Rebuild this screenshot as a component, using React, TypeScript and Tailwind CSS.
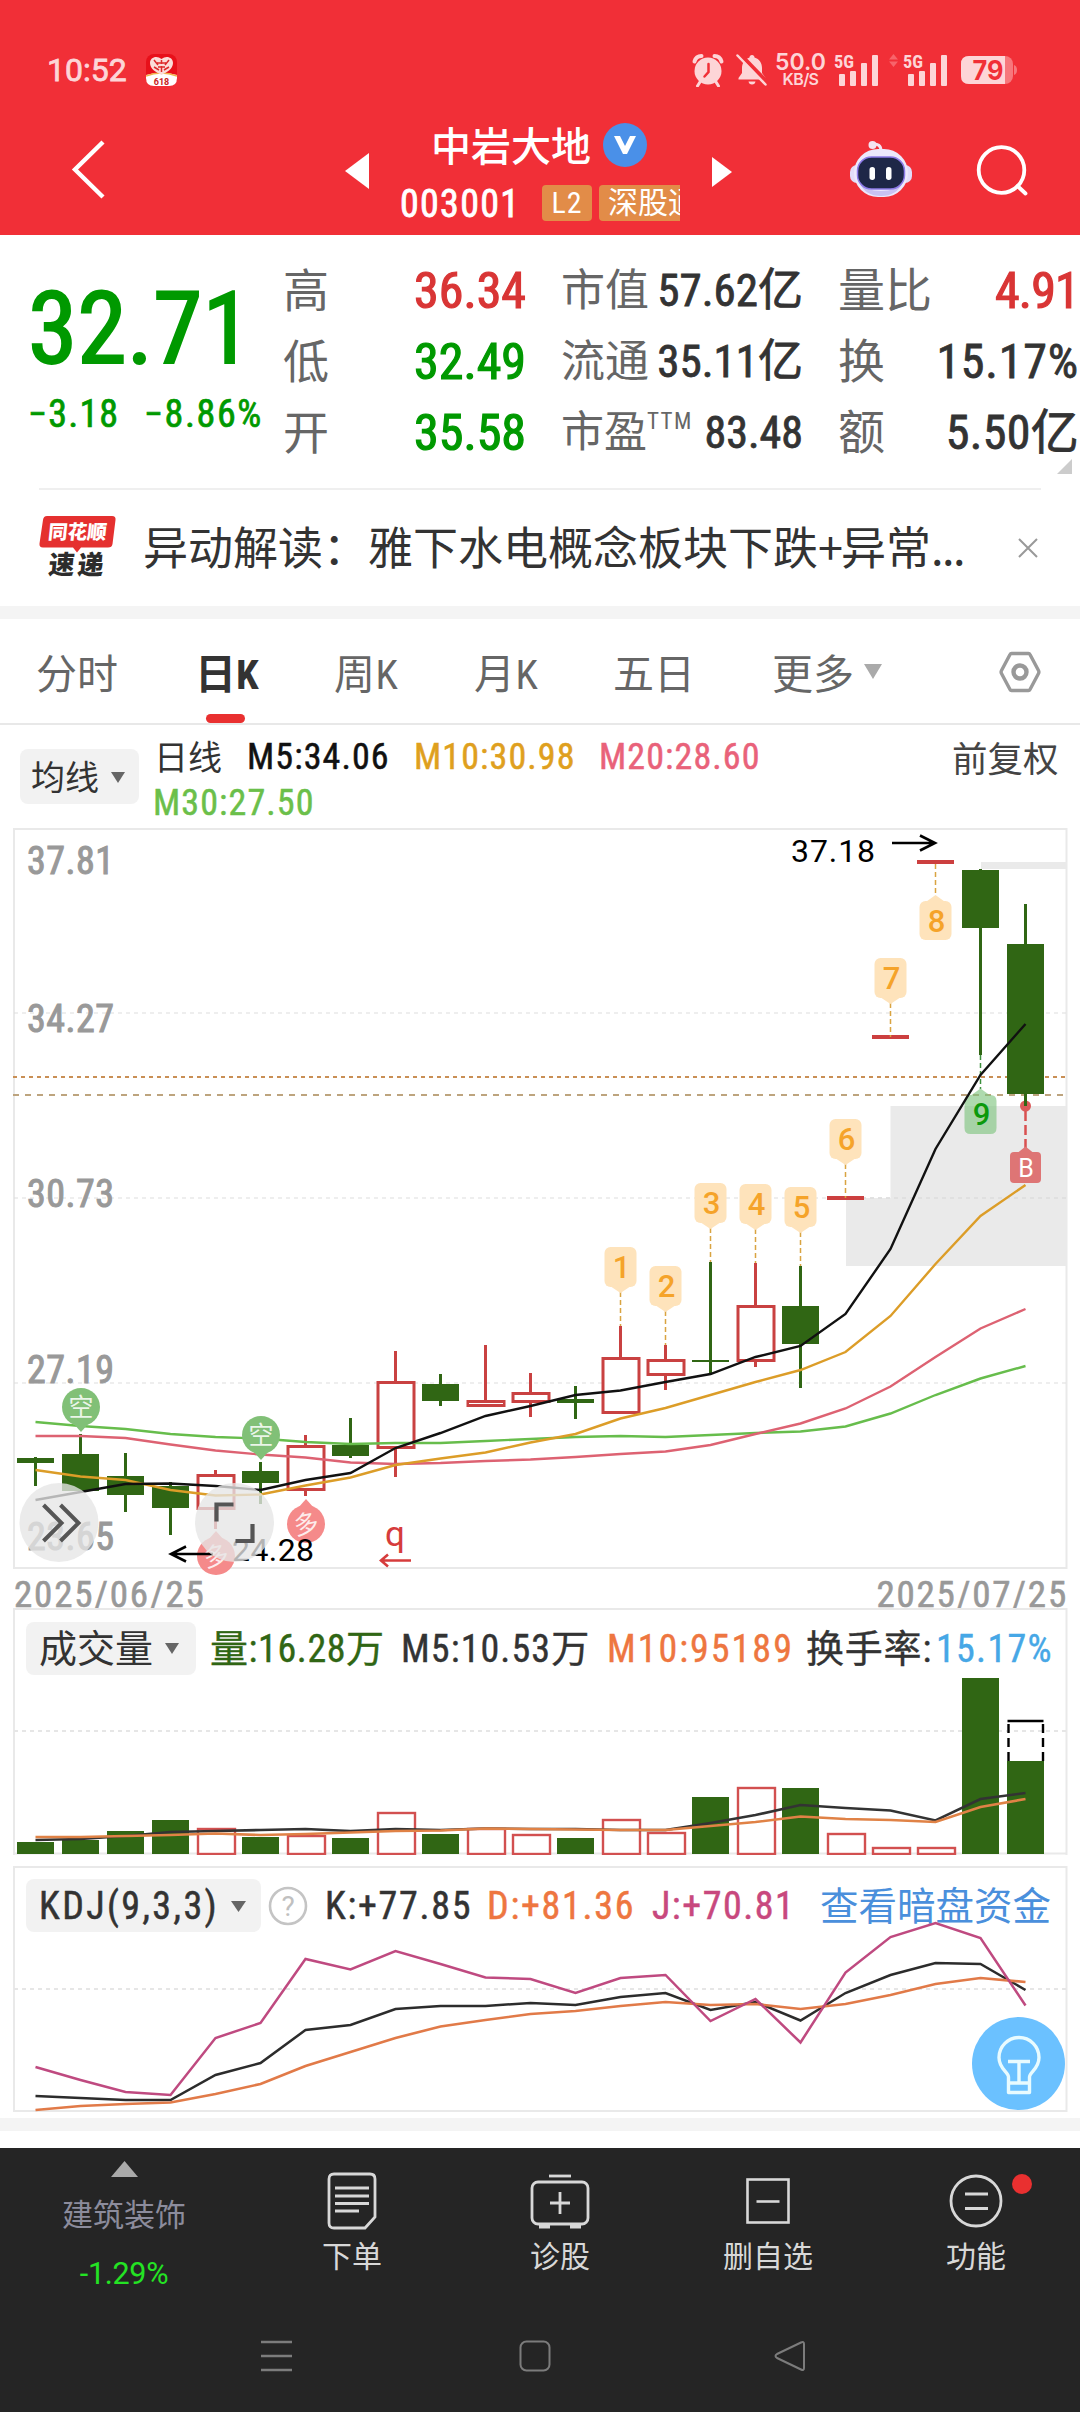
import type { ReactNode } from "react";

type Candle = {
  up: boolean;
  high: number;
  top: number;
  bottom: number;
  low: number;
};

const x = (i: number) => 35.5 + i * 45;

const line = (values: number[]) => values.map((v, i) => `${x(i)},${v}`).join(" ");

// [up, high, top, bottom, low]
const candles: Candle[] = (
  [
    [0, 1457, 1458, 1463, 1486],
    [0, 1434, 1454, 1491, 1491],
    [0, 1453, 1476, 1495, 1512],
    [0, 1482, 1486, 1508, 1535],
    [1, 1470, 1474, 1510, 1529],
    [0, 1462, 1471, 1483, 1504],
    [1, 1435, 1445, 1491, 1496],
    [0, 1418, 1445, 1456, 1458],
    [1, 1351, 1381, 1449, 1477],
    [0, 1374, 1384, 1401, 1406],
    [1, 1345, 1400, 1407, 1407],
    [1, 1373, 1392, 1403, 1417],
    [0, 1386, 1399, 1403, 1419],
    [1, 1326, 1357, 1414, 1414],
    [1, 1345, 1359, 1376, 1390],
    [0, 1262, 1360, 1362, 1375],
    [1, 1263, 1305, 1362, 1367],
    [0, 1266, 1306, 1344, 1388],
    [1, 1196, 1196, 1200, 1200],
    [1, 1035, 1035, 1039, 1039],
    [1, 860, 860, 864, 864],
    [0, 869, 870, 928, 1055],
    [0, 904, 944, 1094, 1106],
  ] as number[][]
).map(([up, high, top, bottom, low]) => ({ up: up === 1, high, top, bottom, low }));

const ma5 = [1500, 1492, 1484, 1483.5, 1486, 1490, 1480, 1473, 1448, 1433, 1416, 1406, 1395, 1390.5, 1382, 1374, 1357, 1346, 1314, 1249, 1149, 1075, 1024];
const ma10 = [1470, 1476.5, 1480, 1490, 1495.5, 1494.5, 1485.5, 1477.5, 1465, 1458.5, 1452.5, 1442.5, 1434, 1418.5, 1408, 1395, 1382, 1370, 1352, 1316, 1264, 1216, 1185];
const ma20 = [1436, 1436, 1438, 1444.5, 1450.5, 1454.5, 1457.5, 1462.5, 1464, 1463, 1461, 1459.5, 1457, 1454, 1451.5, 1445, 1434, 1423.5, 1408.5, 1386.5, 1357, 1328.5, 1309];
const ma30 = [1422, 1426, 1429, 1434, 1437, 1438.5, 1442, 1444, 1443, 1443, 1441, 1439, 1437, 1436, 1437, 1435, 1433, 1431.5, 1426.5, 1413.5, 1395, 1378.5, 1366];

const volumeTops = [1842, 1840, 1831, 1820, 1828, 1837, 1835, 1838, 1812, 1834, 1828, 1834, 1838, 1819, 1832, 1797, 1787, 1788, 1833, 1847, 1847, 1678, 1761];
const volM5 = [1840, 1839, 1836, 1832, 1831, 1830, 1829, 1831, 1829, 1830, 1828.5, 1829, 1829, 1830, 1830, 1823, 1815, 1805, 1808, 1810.5, 1820.5, 1799, 1793];
const volM10 = [1837, 1837, 1836, 1835, 1833.5, 1835, 1834, 1832.5, 1831, 1830.5, 1828.5, 1829, 1829.5, 1830, 1830, 1826, 1822, 1816.5, 1819, 1820, 1822, 1807, 1799];

const kLine = [2096, 2098, 2100, 2100, 2075, 2063, 2030, 2025, 2009, 2006, 2006, 2003, 2005, 1997, 1993, 2010, 2002, 2020.5, 1993, 1975, 1963, 1964, 1990];
const dLine = [2110, 2106, 2104, 2102.5, 2094, 2084, 2066, 2052, 2038, 2026.5, 2020, 2014, 2011, 2006, 2002, 2005, 2004, 2009, 2004, 1995, 1984, 1978, 1982];
const jLine = [2067, 2080, 2092, 2095, 2038, 2023, 1959, 1969.5, 1951, 1964, 1977.5, 1979, 1993, 1978, 1975, 2021, 1999, 2042.5, 1972.5, 1937, 1923, 1938, 2005.5];

const axisLabels = [
  { text: "37.81", y: 874 },
  { text: "34.27", y: 1032 },
  { text: "30.73", y: 1207 },
  { text: "27.19", y: 1383 },
  { text: "23.65", y: 1550 },
];

// sequence markers above the candles, top is the y of the label box
const countMarks = [
  { n: 1, i: 13, top: 1247 },
  { n: 2, i: 14, top: 1266 },
  { n: 3, i: 15, top: 1183 },
  { n: 4, i: 16, top: 1184 },
  { n: 5, i: 17, top: 1187 },
  { n: 6, i: 18, top: 1119 },
  { n: 7, i: 19, top: 958 },
];

function Caret({ className }: { className: string }) {
  return (
    <svg viewBox="0 0 14 11" preserveAspectRatio="none" className={className}>
      <path d="M0 0h14L7 11z" fill="currentColor" />
    </svg>
  );
}

function Signal() {
  return (
    <svg width="46" height="34" viewBox="0 0 46 34" fill="#fdd5d7">
      <text x="0" y="15" fontSize="18" fontWeight="700" textLength="20" lengthAdjust="spacingAndGlyphs" className="[font-family:'Roboto_Condensed',sans-serif]">5G</text>
      <rect x="5" y="21" width="6" height="12" rx="1" />
      <rect x="16" y="18" width="6" height="15" rx="1" />
      <rect x="27" y="10" width="6" height="23" rx="1" />
      <rect x="38" y="2" width="6" height="31" rx="1" />
    </svg>
  );
}

function StatusBar() {
  return (
    <div className="mt-10 flex h-[60px] items-center pl-[47px] text-[#fdd5d7]">
      <span className="w-[99px] text-[32px] leading-none font-normal [-webkit-text-stroke:0.8px] [font-family:Roboto,sans-serif]">10:52</span>

      {/* App notification */}
      <svg width="31" height="32" viewBox="0 0 31 32">
        <rect width="31" height="32" rx="8" fill="#e8101a" />
        <path d="M0 21q15-5 31 0v3q0 8-8 8H8q-8 0-8-8z" fill="#fff" />
        <path d="M0 22q15-6 31 0" fill="none" stroke="#f0b24a" strokeWidth="1.5" />
        <path d="M15.500 5C11 1 4 3 4 9c0 6 6 9 11.500 12C21 18 27 15 27 9c0-6-7-8-11.500-4z" fill="#fbdcd8" />
        <path d="M8 6l4 5M23 6l-4 5M8 13l5 3M23 13l-5 3M15.500 6v4M11 9h9M12 13h7M15.500 12v6" stroke="#dd2a2a" strokeWidth="1.500" fill="none" />
        <text x="15.500" y="30.500" textAnchor="middle" fontSize="9" fontWeight="700" fill="#c81c1c" className="[font-family:Roboto,sans-serif]">618</text>
      </svg>

      {/* Alarm */}
      <svg width="32" height="34" viewBox="0 0 32 34" className="ml-[515px]">
        <circle cx="16" cy="18" r="13.500" fill="#fdd5d7" />
        <path d="M2.500 8.500Q4 3 9.500 3M29.500 8.500Q28 3 22.500 3" stroke="#fdd5d7" strokeWidth="4" strokeLinecap="round" fill="none" />
        <path d="M8 29l-2.500 4M24 29l2.500 4" stroke="#fdd5d7" strokeWidth="3" strokeLinecap="round" />
        <path d="M16.500 11v8l-4 4.500" stroke="#f12f37" strokeWidth="2.500" fill="none" strokeLinecap="round" />
      </svg>

      {/* Muted bell */}
      <svg width="32" height="32" viewBox="0 0 32 32" className="ml-3">
        <path d="M16 1c1.500 0 2.500 1 2.500 2.500C23.500 5 26 9 26 14v5l3.500 5v1.500H2.500V24L6 19v-5c0-5 3-9 7.500-10.500C13.500 2 14.500 1 16 1z" fill="#fdd5d7" />
        <path d="M12.500 27.500h7q-.5 3-3.500 3t-3.500-3z" fill="#fdd5d7" />
        <path d="M3-1l29 30" stroke="#f12f37" strokeWidth="4" />
        <path d="M1.500 1.500L29.500 30.500" stroke="#fdd5d7" strokeWidth="2.500" strokeLinecap="round" />
      </svg>

      <div className="ml-[7px] flex w-[51px] flex-col items-center [font-family:Inter,sans-serif]">
        <span className="text-[23px] leading-[18px] font-semibold">50.0</span>
        <span className="text-[16px] leading-[16px] font-semibold tracking-[-0.6px]">KB/S</span>
      </div>

      <div className="ml-2 flex items-center">
        <Signal />
        <svg width="9" height="13" viewBox="0 0 9 13" className="-mt-5 ml-[9px]" fill="#f7646a">
          <path d="M0 5.500L4.500 0 9 5.500zM0 7.500L4.500 13 9 7.500z" />
        </svg>
        <span className="ml-[5px] flex"><Signal /></span>
      </div>

      {/* Battery */}
      <svg width="56" height="30" viewBox="0 0 56 30" className="ml-3">
        <rect x="0" y="1" width="52" height="28" rx="8" fill="#f7777c" />
        <path d="M53 10q3 1 3 5t-3 5z" fill="#f7777c" />
        <path d="M8 1h36v28H8q-8 0-8-8V9q0-8 8-8z" fill="#fdd5d7" />
        <text x="27" y="24.500" textAnchor="middle" fontSize="27" fontWeight="700" fill="#f12f37" textLength="31" lengthAdjust="spacingAndGlyphs" className="[font-family:Inter,sans-serif]">79</text>
      </svg>
    </div>
  );
}

function NavBar() {
  return (
    <div className="flex h-[135px] items-start text-white">
      <svg width="34" height="60" viewBox="0 0 34 60" className="mt-10 ml-[71px]" fill="none" stroke="#fff" strokeWidth="4.400">
        <path d="M32 2L4 29.500 32 57" />
      </svg>
      <svg width="24" height="36" viewBox="0 0 24 36" className="mt-[53px] ml-[240px]">
        <path d="M24 0v36L0 18z" fill="#fff" />
      </svg>

      <div className="ml-[31px] flex w-[280px] flex-col gap-[14px] overflow-hidden pt-[20px]">
        <div className="flex h-[50px] items-center justify-center gap-3">
          <h1 className="-mt-[3px] -ml-[2px] text-[40px] leading-none font-medium [font-family:'Noto_Sans_CJK_SC',sans-serif]">中岩大地</h1>
          <span className="flex h-11 w-11 items-center justify-center rounded-full bg-[#4a90e8]">
            <svg width="24" height="20" viewBox="0 0 24 20"><path d="M1 1h6l5 10 5-10h6l-9 18h-4z" fill="#fff" /></svg>
          </span>
        </div>
        <div className="mt-px flex h-9 items-center">
          <span className="w-[142px] shrink-0 pt-[2px] text-[38px] leading-none tracking-[1.3px] [-webkit-text-stroke:0.8px]">003001</span>
          <span className="flex h-9 w-[50px] shrink-0 items-center justify-center rounded-[4px] bg-[#e28c48] text-[30px] leading-none tracking-[1px]">L2</span>
          <span className="ml-[7px] flex h-9 shrink-0 items-center rounded-[4px] bg-[#e28c48] px-[9px] text-[30px] leading-none whitespace-nowrap">深股通</span>
        </div>
      </div>

      <svg width="20" height="30" viewBox="0 0 20 30" className="mt-[57px] ml-8">
        <path d="M0 0v30l20-15z" fill="#fff" />
      </svg>

      {/* Assistant robot */}
      <svg width="62" height="57" viewBox="0 0 62 57" className="mt-[41px] ml-[118px]">
        <circle cx="22.500" cy="4" r="4" fill="#f4e4f2" />
        <path d="M22 3q9-1 9 7" fill="none" stroke="#f4e4f2" strokeWidth="3" />
        <rect x="0" y="24" width="62" height="18" rx="7" fill="#e2dcf8" />
        <rect x="4" y="8" width="54" height="48" rx="24" fill="#ece8fb" />
        <path d="M9 41q6 14 22 14t22-14q-7 9-22 9T9 41z" fill="#c9c2f2" />
        <rect x="7.500" y="16" width="47" height="32" rx="14" fill="#1e2747" stroke="#8d7be8" strokeWidth="1.500" />
        <rect x="19.500" y="26" width="5.500" height="13" rx="2.700" fill="#fff" />
        <rect x="36" y="26" width="5.500" height="13" rx="2.700" fill="#fff" />
      </svg>

      <svg width="54" height="54" viewBox="0 0 54 54" className="mt-11 ml-[64px]" fill="none" stroke="#fff" strokeWidth="3.800" strokeLinecap="round">
        <circle cx="25.500" cy="26" r="22.800" />
        <path d="M41.500 42l8 7.500" />
      </svg>
    </div>
  );
}

function Stat({ label, size, children }: { label: ReactNode; size: string; children: ReactNode }) {
  return (
    <div className="flex h-[71px] items-center justify-between leading-none whitespace-nowrap">
      <span className={`text-[#666] ${size}`}>{label}</span>
      {children}
    </div>
  );
}

function Quote() {
  return (
    <section className="h-[253px] pt-[20px]">
      <div className="flex">
        <div className="w-[283px] shrink-0 pl-[28px] text-[#009900]">
          <div className="mt-[22px] text-[100px] leading-[104px] [-webkit-text-stroke:2px]">32.71</div>
          <div className="mt-[13px] flex text-[38px] leading-[40px] tracking-[1.2px] [-webkit-text-stroke:0.7px]">
            <span className="w-[116px]">−3.18</span>
            <span className="tracking-[1.6px]">−8.86%</span>
          </div>
        </div>

        <div className="w-[243px] shrink-0">
          <Stat label="高" size="text-[46px]"><b className="text-[50px] font-normal text-[#d93535] [-webkit-text-stroke:1.2px]">36.34</b></Stat>
          <Stat label="低" size="text-[46px]"><b className="text-[50px] font-normal text-[#009900] [-webkit-text-stroke:1.2px]">32.49</b></Stat>
          <Stat label="开" size="text-[46px]"><b className="text-[50px] font-normal text-[#009900] [-webkit-text-stroke:1.2px]">35.58</b></Stat>
        </div>

        <div className="ml-[35px] w-[242px] shrink-0 text-[#333]">
          <Stat label="市值" size="text-[44px]"><span className="text-[45px] [-webkit-text-stroke:0.8px]">57.62亿</span></Stat>
          <Stat label="流通" size="text-[44px]"><span className="text-[45px] [-webkit-text-stroke:0.8px]">35.11亿</span></Stat>
          <Stat label={<>市盈<sup className="relative -top-[18px] align-baseline text-[23px] tracking-[1.4px]">TTM</sup></>} size="text-[43px]">
            <span className="text-[44px] [-webkit-text-stroke:0.8px]">83.48</span>
          </Stat>
        </div>

        <div className="ml-[35px] w-[241px] shrink-0 text-[#333]">
          <Stat label="量比" size="text-[47px]"><b className="text-[50px] font-normal tracking-[-0.8px] text-[#d93535] [-webkit-text-stroke:1.2px]">4.91</b></Stat>
          <Stat label="换" size="text-[47px]"><span className="text-[48px] tracking-[0.8px] [-webkit-text-stroke:0.8px]">15.17%</span></Stat>
          <Stat label="额" size="text-[47px]"><span className="text-[48px] tracking-[0.3px] [-webkit-text-stroke:0.8px]">5.50亿</span></Stat>
        </div>
      </div>
      <svg width="15" height="15" viewBox="0 0 15 15" className="-mt-[9px] ml-[1057px]">
        <path d="M15 0v15H0z" fill="#ccc" />
      </svg>
    </section>
  );
}

function News() {
  return (
    <section className="mx-[39px] flex h-[118px] items-center border-t-2 border-[#efefef]">
      <svg width="78" height="64" viewBox="0 0 78 64">
        <path d="M8 0h65q4 0 3.500 4l-3 24q-.5 3.500-4.500 3.500H42l-4 5-4-5H4q-4 0-3.500-4L4 4q.5-4 4-4z" fill="#e5302f" />
        <g className="[font-family:'Noto_Sans_CJK_SC',sans-serif]" fontWeight="900" transform="skewX(-6)">
          <text x="11" y="23" fontSize="19.500" fill="#fff">同花顺</text>
          <text x="15" y="58.500" fontSize="26" fill="#2c2c2c" textLength="55">速递</text>
        </g>
      </svg>
      <p className="-mt-[5px] ml-[26px] w-[850px] text-[45px] leading-none whitespace-nowrap text-[#333] [font-family:'Noto_Sans_CJK_SC',sans-serif]">
        异动解读：雅下水电概念板块下跌<span className="tracking-[-2px]">+</span>异常<span className="tracking-[-1.5px]">...</span>
      </p>
      <svg width="20" height="20" viewBox="0 0 20 20" className="ml-[25px]" stroke="#999" strokeWidth="2">
        <path d="M1 1l18 18M19 1L1 19" />
      </svg>
    </section>
  );
}

function Tabs() {
  return (
    <nav className="flex h-[106px] border-b-2 border-[#e8e8e8] pt-[34px] pl-[36px] text-[41px] leading-[44px] text-[#666]">
      <span className="w-[159px]">分时</span>
      <div className="flex w-[139px] flex-col">
        <span className="font-bold text-[#333]">日K</span>
        <span className="mt-[17px] ml-[11px] h-[10px] w-[39px] rounded-[5px] bg-[#e93030]" />
      </div>
      <span className="w-[140px] tracking-[0.6px]">周K</span>
      <span className="w-[139px] tracking-[0.6px]">月K</span>
      <span className="w-[159px]">五日</span>
      <span className="w-[92px]">更多</span>
      <Caret className="mt-[11px] h-[15px] w-[18px] text-[#aaa]" />
      <svg width="42" height="42" viewBox="0 0 42 42" className="-mt-[2px] ml-[117px]" fill="none" stroke="#999" strokeWidth="3.400" strokeLinejoin="round">
        <path d="M12.500 2.500h17q1 0 1.500 1l8.500 16q.8 1.500 0 3L31 38.500q-.5 1-1.500 1h-17q-1 0-1.500-1L2.500 22.500q-.8-1.500 0-3L11 3.500q.5-1 1.500-1z" />
        <circle cx="21" cy="21" r="6.500" strokeWidth="4.400" />
      </svg>
    </nav>
  );
}

function MaLegend() {
  return (
    <div className="flex h-[103px] text-[36px] leading-[46px]">
      <div className="mt-6 ml-5 flex h-[55px] w-[119px] items-center rounded-[8px] bg-[#f2f2f2] pt-[2px] pl-[11px] text-[34px] text-[#333]">
        均线
        <Caret className="ml-3 h-[11px] w-[14px] text-[#666]" />
      </div>
      <div className="ml-[14px] w-[701px] pt-[9px] [-webkit-text-stroke:0.5px]">
        <div className="flex gap-[25px]">
          <span className="w-[69px] pt-[2px] pl-px text-[34px] leading-[44px] whitespace-nowrap text-[#333] [-webkit-text-stroke:0px]">日线</span>
          <span className="w-[142px] tracking-[1.1px] text-[#111]">M5:34.06</span>
          <span className="w-[160px] tracking-[1.1px] text-[#dfa01e]">M10:30.98</span>
          <span className="w-[160px] tracking-[1.1px] text-[#e9627a]">M20:28.60</span>
        </div>
        <div className="tracking-[1.1px] text-[#6bbf4a]">M30:27.50</div>
      </div>
      <span className="ml-[98px] pt-[12px] text-[35.5px] text-[#444]">前复权</span>
    </div>
  );
}

function CountMark({ n, i, top }: { n: number; i: number; top: number }) {
  const cx = x(i);
  return (
    <g>
      <path d={`M${cx} ${top + 45}v34`} stroke="#d9a441" strokeWidth="1.5" strokeDasharray="5 3" />
      <rect x={cx - 16} y={top} width="32" height="40" rx="6" fill="#fee3bb" />
      <path d={`M${cx - 9} ${top + 40}h18l-9 6z`} fill="#fee3bb" />
      <text x={cx + 1} y={top + 31} textAnchor="middle" fontSize="31" fontWeight="500" fill="#f5a32a">{n}</text>
    </g>
  );
}

// Round signal bubble, pointing down for 空 and up for 多
function Bubble({ cx, cy, text, fill, down }: { cx: number; cy: number; text: string; fill: string; down: boolean }) {
  const s = down ? 1 : -1;
  return (
    <g>
      <circle cx={cx} cy={cy} r="19" fill={fill} />
      <path d={`M${cx - 8} ${cy + s * 16}L${cx} ${cy + s * 25}L${cx + 8} ${cy + s * 16}z`} fill={fill} />
      <text x={cx} y={cy + 9} textAnchor="middle" fontSize="25" fill="#fff" fillOpacity="0.85" transform={down ? undefined : `rotate(-12 ${cx} ${cy})`}>{text}</text>
    </g>
  );
}

function PriceChart() {
  return (
    <svg width="1080" height="742" viewBox="0 828 1080 742" fill="none" className="block overflow-visible [font-family:Roboto,'Noto_Sans_CJK_SC',sans-serif]">
      <rect x="14" y="829" width="1052.5" height="739" stroke="#e9e9e9" strokeWidth="2" />
      <path d="M14 1013H1066M14 1198H1066M14 1383H1066" stroke="#dedede" strokeWidth="1.2" strokeDasharray="4 4" />

      <g fill="#999" stroke="#999" strokeWidth="1" fontSize="38" className="[font-family:'Roboto_Condensed',sans-serif]">
        {axisLabels.map((l) => (
          <text key={l.text} x="27" y={l.y} textLength="87">{l.text}</text>
        ))}
      </g>

      {/* Gap zones */}
      <path d="M981 862h86v7h-86zM890.500 1106h176v92h-176zM846 1198h221v68H846z" fill="#eaeaea" />
      <path d="M846 1198H1066" stroke="#d6d6d6" strokeWidth="1.2" strokeDasharray="4 4" />
      <path d="M13 1077H1066" stroke="#c98f55" strokeWidth="2" strokeDasharray="4 4" />
      <path d="M13 1095H1066" stroke="#bda47e" strokeWidth="2" strokeDasharray="6 6" />

      {candles.map((c, i) => {
        const cx = x(i);
        if (!c.up) {
          return (
            <g key={i}>
              <path d={`M${cx} ${c.high}V${c.low}`} stroke="#306614" strokeWidth="3" />
              <rect x={cx - 18.5} y={c.top} width="37" height={c.bottom - c.top} fill="#306614" />
            </g>
          );
        }
        if (c.bottom - c.top < 5) {
          return <rect key={i} x={cx - 18.5} y={c.top} width="37" height="4" fill="#cc3f3f" />;
        }
        return (
          <g key={i} stroke="#c94141" strokeWidth="3">
            <path d={`M${cx} ${c.high}V${c.top}M${cx} ${c.bottom}V${c.low}`} />
            <rect x={cx - 17.5} y={c.top + 1.5} width="36" height={c.bottom - c.top - 3} fill="#fff" />
          </g>
        );
      })}

      {countMarks.map((m) => (
        <CountMark key={m.n} {...m} />
      ))}

      {/* 8 hangs below its candle */}
      <path d="M935.500 864v32" stroke="#d9a441" strokeWidth="1.500" strokeDasharray="5 3" />
      <path d="M926.500 901.500h18l-9-6.500z" fill="#fee3bb" />
      <rect x="919.500" y="901" width="32" height="39" rx="6" fill="#fee3bb" />
      <text x="936.500" y="932" textAnchor="middle" fontSize="31" fontWeight="500" fill="#f5a32a">8</text>

      <path d="M980.500 1055v34" stroke="#3c8f3c" strokeWidth="1.500" strokeDasharray="5 3" />
      <path d="M970.500 1095h1l9-6.500 9 6.500h1q6 0 6 6v27q0 6-6 6h-20q-6 0-6-6v-27q0-6 6-6z" fill="#7cc47c" fillOpacity="0.62" />
      <text x="981.500" y="1125" textAnchor="middle" fontSize="31" fontWeight="500" fill="#0b990b">9</text>

      <polyline points={line(ma30)} stroke="#67bd4c" strokeWidth="2.4" />
      <polyline points={line(ma20)} stroke="#dd6272" strokeWidth="2.4" />
      <polyline points={line(ma10)} stroke="#dc9d28" strokeWidth="2.4" />
      <polyline points={line(ma5)} stroke="#111" strokeWidth="2.4" />

      {/* Buy point */}
      <circle cx="1025.500" cy="1106" r="5.500" fill="#dc5a5a" />
      <path d="M1025.500 1096v10" stroke="#306614" strokeWidth="3" />
      <path d="M1025.500 1111v37" stroke="#d95050" strokeWidth="2.500" strokeDasharray="10 4" />
      <path d="M1018 1152.500l7.500-6 7.500 6z" fill="#de7575" />
      <rect x="1010" y="1152" width="31" height="31" rx="4" fill="#de7575" />
      <text x="1026" y="1176.500" textAnchor="middle" fontSize="25" fill="#fff">B</text>

      <Bubble cx={81} cy={1407} text="空" fill="#81c077" down />
      <Bubble cx={261} cy={1435} text="空" fill="#81c077" down />
      <Bubble cx={306} cy={1524} text="多" fill="#f58a8a" down={false} />
      <Bubble cx={216} cy={1556} text="多" fill="#f58a8a" down={false} />

      <g fill="#000" fontSize="32">
        <text x="791" y="862" textLength="84">37.18</text>
        <text x="232" y="1561" textLength="82">24.28</text>
      </g>
      <path d="M892 843h43M920 835.500l15 7.500-15 7.500M213 1554h-42M186 1546.500l-15 7.500 15 7.500" stroke="#000" strokeWidth="2.600" />
      <text x="385" y="1546" fontSize="35" fill="#d63c3c">q</text>
      <path d="M411 1560.500h-30M388 1554.500l-7 6 7 6" stroke="#d63c3c" strokeWidth="2.600" />

      {/* Floating chart controls */}
      <g fill="#e6e6e6" fillOpacity="0.78">
        <circle cx="59" cy="1522.500" r="39.500" />
        <circle cx="234.500" cy="1522.500" r="39.500" />
      </g>
      <path d="M43.500 1505l18 18-18 18M60.500 1505l18 18-18 18" stroke="#555" strokeWidth="4" />
      <path d="M233.500 1504.500h-17v17M252.500 1524v17h-17" stroke="#555" strokeWidth="4.200" />
    </svg>
  );
}

function VolumePanel() {
  return (
    <section className="relative h-[247px]">
      <svg width="1080" height="247" viewBox="0 1608 1080 247" fill="none" className="absolute inset-0">
        <path d="M14 1855V1609H1066.500V1855M14 1853.500H1066.500" stroke="#e9e9e9" strokeWidth="2" />
        <path d="M14 1731H1066" stroke="#e6e6e6" strokeWidth="2" strokeDasharray="4 4" />
        {volumeTops.map((top, i) =>
          candles[i].up ? (
            <rect key={i} x={x(i) - 17.5} y={top + 1} width="37" height={1853 - top} stroke="#d25050" strokeWidth="2.4" fill="#fff" />
          ) : (
            <rect key={i} x={x(i) - 18.5} y={top} width="37" height={1854 - top} fill="#306614" />
          ),
        )}
        <path d="M1007.500 1721h36" stroke="#000" strokeWidth="2.600" />
        <path d="M1008.500 1761v-38M1043 1761v-38" stroke="#000" strokeWidth="2.400" strokeDasharray="9 5" />
        <polyline points={line(volM5)} stroke="#333" strokeWidth="2.6" />
        <polyline points={line(volM10)} stroke="#e08246" strokeWidth="2.6" />
      </svg>
      <div className="relative flex h-[80px] items-center pt-px pl-[26px] text-[38px] leading-none whitespace-nowrap [-webkit-text-stroke:0.4px]">
        <div className="flex h-[53px] w-[170px] items-center rounded-[8px] bg-[#f2f2f2] pl-[13px] text-[#333] [-webkit-text-stroke:0px]">
          成交量
          <Caret className="ml-3 h-[11px] w-[14px] text-[#666]" />
        </div>
        <span className="ml-[14px] w-[191px] tracking-[0.6px] text-[#306614]">量:16.28万</span>
        <span className="w-[206px] tracking-[1.1px] text-[#333]">M5:10.53万</span>
        <span className="w-[199px] tracking-[2px] text-[#ee7640]">M10:95189</span>
        <span className="w-[130px] tracking-[0.8px] text-[#333]">换手率:</span>
        <span className="tracking-[1.3px] text-[#46a7e6]">15.17%</span>
      </div>
    </section>
  );
}

function KdjPanel() {
  return (
    <section className="relative mt-[11px] h-[247px]">
      <div className="flex h-[78px] items-center pt-px pl-[26px] text-[38px] leading-none whitespace-nowrap [-webkit-text-stroke:0.5px]">
        <div className="flex h-[53px] w-[235px] items-center justify-between rounded-[8px] bg-[#f2f2f2] pt-px pr-[15px] pl-[13px] tracking-[2.4px] text-[#333]">
          KDJ(9,3,3)
          <Caret className="h-[11px] w-[15px] text-[#666]" />
        </div>
        <svg width="40" height="40" viewBox="0 0 40 40" className="ml-[7px]">
          <circle cx="20" cy="20" r="18" fill="none" stroke="#c4c4c4" strokeWidth="2.600" />
          <text x="20" y="30" textAnchor="middle" fontSize="28" fill="#c0c0c0" className="[font-family:Roboto,sans-serif]">?</text>
        </svg>
        <span className="ml-[17px] w-[162px] tracking-[1.7px] text-[#333]">K:+77.85</span>
        <span className="w-[165px] tracking-[1.7px] text-[#ee7640]">D:+81.36</span>
        <span className="w-[168px] tracking-[1.5px] text-[#c8487e]">J:+70.81</span>
        <span className="pt-[3px] text-[38.5px] text-[#4a8fdc] [-webkit-text-stroke:0px]">查看暗盘资金</span>
      </div>
      <svg width="1080" height="247" viewBox="0 1866 1080 247" fill="none" className="absolute inset-0">
        <rect x="14" y="1867" width="1052.5" height="244" stroke="#e9e9e9" strokeWidth="2" />
        <path d="M14 1989H1066" stroke="#e6e6e6" strokeWidth="2" strokeDasharray="4 4" />
        <polyline points={line(kLine)} stroke="#2c2c2c" strokeWidth="2.5" />
        <polyline points={line(dLine)} stroke="#e17a48" strokeWidth="2.6" />
        <polyline points={line(jLine)} stroke="#bf4a80" strokeWidth="2.5" />

        {/* Tips button */}
        <circle cx="1018.500" cy="2063.500" r="46.500" fill="#6bc1ff" />
        <g stroke="#e8fbff" strokeWidth="3.400" strokeLinejoin="round">
          <path d="M1008.500 2083v-6c0-5-9.500-8-9.500-19.500a20 20 0 0 1 40 0c0 11.500-9.500 14.500-9.500 19.500v15.500h-21v-9.500h21" />
          <path d="M1008 2061.500h22M1019 2061.500v21" />
        </g>
      </svg>
    </section>
  );
}

function NavItem({ label, children }: { label: string; children: ReactNode }) {
  return (
    <div className="flex w-[208px] flex-col items-center">
      <div className="mt-[20px] flex h-[66px] items-center">{children}</div>
      <span className="mt-[8px] text-[30px] leading-[30px]">{label}</span>
    </div>
  );
}

function BottomBar() {
  return (
    <footer className="h-[264px] bg-[#252525] text-[#d8d8d8]">
      <div className="flex h-[162px]">
        <div className="flex w-[248px] flex-col items-center">
          <svg width="27" height="16" viewBox="0 0 27 16" className="mt-[13px]"><path d="M0 16L13.500 0 27 16z" fill="#aaa" /></svg>
          <span className="mt-[23px] text-[31px] leading-[32px] text-[#8c8c9c]">建筑装饰</span>
          <span className="mt-[26px] text-[30.5px] leading-[32px] tracking-[-0.3px] text-[#24e324] [font-family:Roboto,sans-serif]">-1.29%</span>
        </div>

        <NavItem label="下单">
          <svg width="50" height="58" viewBox="0 0 50 58" fill="none" stroke="#d8d8d8" strokeWidth="2.800">
            <path d="M7 2h36q5 0 5 5v38L38 56H7q-5 0-5-5V7q0-5 5-5z" />
            <path d="M8 16h34M8 24h34M8 31.500h34M8 39h24" />
          </svg>
        </NavItem>
        <NavItem label="诊股">
          <svg width="60" height="56" viewBox="0 0 60 56" fill="none" stroke="#d8d8d8" strokeWidth="2.800">
            <path d="M19 3h22" />
            <rect x="2" y="9" width="56" height="42" rx="6" />
            <path d="M30 19v22M20 30h20" />
            <path d="M9 53.500h11M40 53.500h11" strokeWidth="4" />
          </svg>
        </NavItem>
        <NavItem label="删自选">
          <svg width="44" height="46" viewBox="0 0 44 46" fill="none" stroke="#d8d8d8" strokeWidth="2.600">
            <rect x="1.500" y="1.500" width="41" height="43" />
            <path d="M10.500 23.500h23" />
          </svg>
        </NavItem>
        <div className="relative">
          <NavItem label="功能">
            <svg width="54" height="54" viewBox="0 0 54 54" fill="none" stroke="#d8d8d8" strokeWidth="2.800">
              <circle cx="27" cy="27" r="25" />
              <path d="M16 20h23M16 34.500h23" />
            </svg>
          </NavItem>
          <span className="absolute top-[26px] left-[140px] h-5 w-5 rounded-full bg-[#e93030]" />
        </div>
      </div>

      {/* System keys */}
      <div className="flex h-[92px] items-center pl-[261px]">
        <svg width="31" height="34" viewBox="0 0 31 34" stroke="#7c7c7c" strokeWidth="2.600">
          <path d="M0 3h31M0 17h31M0 31h31" />
        </svg>
        <svg width="32" height="32" viewBox="0 0 32 32" fill="none" stroke="#7c7c7c" strokeWidth="2" className="ml-[227px]">
          <rect x="1.500" y="1.500" width="29" height="29" rx="6" />
        </svg>
        <svg width="32" height="32" viewBox="0 0 32 32" fill="none" stroke="#7c7c7c" strokeWidth="2" strokeLinejoin="round" className="ml-[223px]">
          <path d="M27 2.500Q30 1 30 4v24q0 3-3 1.500L3 18q-3-2 0-4z" />
        </svg>
      </div>
    </footer>
  );
}

export default function App() {
  return (
    <main className="flex h-[2412px] w-[1080px] flex-col overflow-hidden bg-white [font-family:'Roboto_Condensed','Noto_Sans_CJK_SC',sans-serif]">
      <header className="flex h-[235px] flex-col bg-[#f12f37]">
        <StatusBar />
        <NavBar />
      </header>

      <Quote />
      <News />
      <div className="h-[13px] bg-[#f4f4f4]" />

      <Tabs />
      <MaLegend />
      <PriceChart />
      <div className="flex h-[38px] items-end justify-between pr-[12px] pl-[14px] text-[37px] leading-[27px] tracking-[1.8px] text-[#999] [-webkit-text-stroke:0.6px]">
        <span>2025/06/25</span>
        <span>2025/07/25</span>
      </div>
      <VolumePanel />
      <KdjPanel />

      <div className="mt-[5px] mb-[17px] h-[13px] bg-[#f4f4f4]" />
      <BottomBar />
    </main>
  );
}
